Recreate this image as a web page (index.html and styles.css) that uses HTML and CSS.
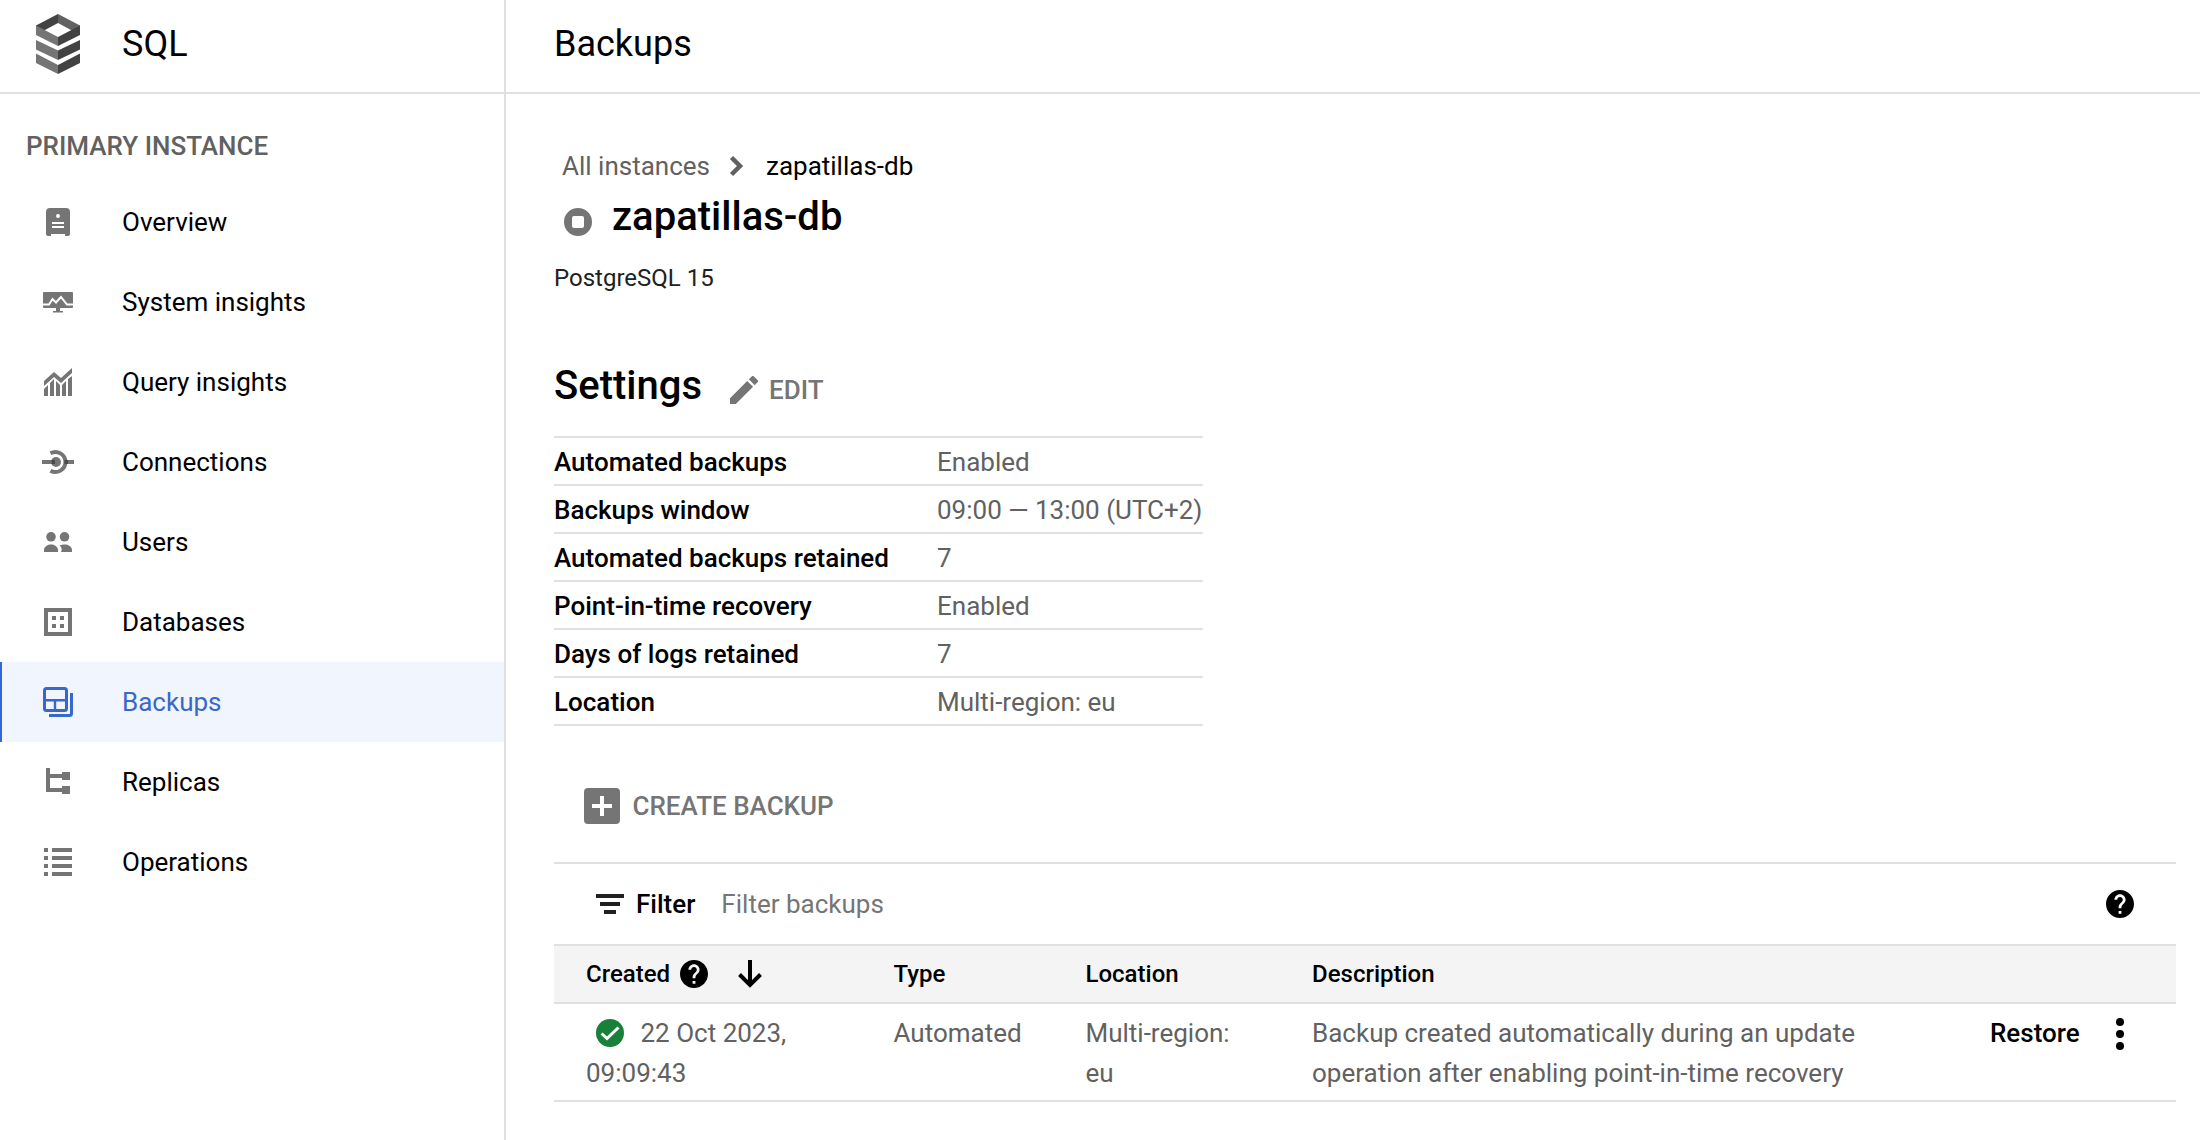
FILE: index.html
```html
<!DOCTYPE html>
<html lang="en">
<head>
<meta charset="utf-8">
<title>SQL – Backups</title>
<link rel="stylesheet" href="styles.css">
</head>
<body>
<div class="app">
  <aside class="sidebar">
    <div class="brand">
      <svg class="brand-logo" viewBox="0 0 44 60">
        <path fill="#424242" d="M22 0L0 11.500v5l9-.5 13-7z"/>
        <path fill="#616161" d="M22 0l22 11.500v5l-9-.5L22 9z"/>
        <path fill="#757575" d="M0 11.500l22 11.500v9L0 21zM0 26l22 10.500v9.500L0 35.500zM0 39.500l22 11.500v9L0 49z"/>
        <path fill="#424242" d="M44 11.500L22 23v9l22-11zM44 26L22 36.500v9.500l22-10.500zM44 39.500L22 51v9l22-11z"/>
      </svg>
      <span class="brand-name">SQL</span>
    </div>
    <h2 class="nav-title">PRIMARY INSTANCE</h2>
    <nav class="nav">
      <a class="nav-item"><svg class="nav-icon" viewBox="0 0 36 36"><path fill-rule="evenodd" d="M10 4h16q4 0 4 4v22q0 2-2 2h-3v-2H11v2H8q-2 0-2-2V8q0-4 4-4zm8 6a2 2 0 1 0 0 4 2 2 0 0 0 0-4zm-6 8v2h12v-2zm0 4v2h12v-2z"/></svg><span>Overview</span></a>
      <a class="nav-item"><svg class="nav-icon" viewBox="0 0 36 36"><path d="M4 8h28q1 0 1 1v14q0 1-1 1H20v3h3v1.500H13V27h3v-3H4q-1 0-1-1V9q0-1 1-1z"/><path class="trace" d="M3 20.500h6l3.500-5.500 3.500 3.500 5-5.500 6 7.500h6"/></svg><span>System insights</span></a>
      <a class="nav-item"><svg class="nav-icon" viewBox="0 0 36 36"><path d="M4 17L14 8l7 6L32 4v5L21 19l-7-6L4 22zM4 25l4-4v11H4zM10 19l4-4v17h-4zM16 17l4 4v11h-4zM22 21l4-4v15h-4zM28 15l4-3v20h-4z"/></svg><span>Query insights</span></a>
      <a class="nav-item"><svg class="nav-icon" viewBox="0 0 36 36"><path class="ring" d="M10.500 9.300a10 10 0 1 1 0 17.400"/><circle cx="16" cy="18" r="5"/><path d="M2 16h12v4H2zM26 16h8v4h-8z"/><path class="joint" d="M11.500 16H15v4h-3.500zM24.500 16H28v4h-3.500z"/></svg><span>Connections</span></a>
      <a class="nav-item"><svg class="nav-icon" viewBox="0 0 36 36"><circle cx="11" cy="12.800" r="4.800"/><circle cx="24.500" cy="12.800" r="4.800"/><path d="M4 28v-2c0-3.500 4-5.500 7-5.500s7 2 7 5.500v2zM21 28c1.500-3 .5-5-1.500-6.500 1.500-.8 3.500-1 5.500-1 3 0 7 2 7 5.500v2z"/></svg><span>Users</span></a>
      <a class="nav-item"><svg class="nav-icon" viewBox="0 0 36 36"><path fill-rule="evenodd" d="M4 4h28v28H4zm4 4v20h20V8z"/><path d="M12 12h4v4h-4zM20 12h4v4h-4zM12 20h4v4h-4zM20 20h4v4h-4z"/></svg><span>Databases</span></a>
      <a class="nav-item active"><svg class="nav-icon" viewBox="0 0 36 36"><path class="outline" d="M6.500 4.500h18q2 0 2 2v18q0 2-2 2h-18q-2 0-2-2v-18q0-2 2-2zM9 31.500h20.500q2 0 2-2V9"/><path class="outline inner" d="M4.500 16.200h22M15 16.200v10"/></svg><span>Backups</span></a>
      <a class="nav-item"><svg class="nav-icon" viewBox="0 0 36 36"><path d="M6 4h4v6h12V8h8v8h-8v-2H10v10h12v-2h8v8h-8v-2H6z"/></svg><span>Replicas</span></a>
      <a class="nav-item"><svg class="nav-icon" viewBox="0 0 36 36"><path d="M4 4h4v4H4zM12 4h20v4H12zM4 12h4v4H4zM12 12h20v4H12zM4 20h4v4H4zM12 20h20v4H12zM4 28h4v4H4zM12 28h20v4H12z"/></svg><span>Operations</span></a>
    </nav>
  </aside>

  <main class="main">
    <header class="page-header"><h1>Backups</h1></header>
    <div class="content">
      <div class="breadcrumb">
        <a>All instances</a>
        <svg class="chevron" viewBox="0 0 12 20"><path d="M1.500 1.500L10 10l-8.500 8.500"/></svg>
        <span>zapatillas-db</span>
      </div>
      <div class="instance">
        <svg class="status" viewBox="0 0 28 28"><path fill-rule="evenodd" d="M14 0a14 14 0 1 0 0 28 14 14 0 0 0 0-28zM10 8h8q2 0 2 2v8q0 2-2 2h-8q-2 0-2-2v-8q0-2 2-2z"/></svg>
        <h2>zapatillas-db</h2>
      </div>
      <p class="engine">PostgreSQL 15</p>

      <div class="settings-head">
        <h2>Settings</h2>
        <button class="btn edit"><svg class="pencil" viewBox="3 3 18 18"><path d="M3 17.250V21h3.750L17.810 9.940l-3.750-3.750L3 17.250zM20.710 7.040a1 1 0 0 0 0-1.410l-2.340-2.340a1 1 0 0 0-1.410 0l-1.830 1.830 3.750 3.750 1.830-1.830z"/></svg><span>EDIT</span></button>
      </div>
      <dl class="settings">
        <div><dt>Automated backups</dt><dd>Enabled</dd></div>
        <div><dt>Backups window</dt><dd>09:00 — 13:00 (UTC+2)</dd></div>
        <div><dt>Automated backups retained</dt><dd>7</dd></div>
        <div><dt>Point-in-time recovery</dt><dd>Enabled</dd></div>
        <div><dt>Days of logs retained</dt><dd>7</dd></div>
        <div><dt>Location</dt><dd>Multi-region: eu</dd></div>
      </dl>

      <button class="btn create"><svg class="plus" viewBox="0 0 36 36"><path fill-rule="evenodd" d="M4 0h28q4 0 4 4v28q0 4-4 4H4q-4 0-4-4V4q0-4 4-4zm12 8v8H8v4h8v8h4v-8h8v-4h-8V8z"/></svg><span>CREATE BACKUP</span></button>

      <section class="backups">
        <div class="filter">
          <svg class="filter-icon" viewBox="0 0 28 20"><path d="M0 0h28v4H0zM4 8h20v4H4zM8 16h12v4H8z"/></svg>
          <b>Filter</b>
          <span class="placeholder">Filter backups</span>
          <svg class="help" viewBox="2 2 20 20"><path d="M12 2C6.480 2 2 6.480 2 12s4.480 10 10 10 10-4.480 10-10S17.520 2 12 2zm1 17h-2v-2h2v2zm2.070-7.750l-.9.920C13.450 12.900 13 13.500 13 15h-2v-.5c0-1.100.45-2.100 1.170-2.830l1.240-1.260c.37-.36.59-.86.59-1.410 0-1.100-.9-2-2-2s-2 .9-2 2H8c0-2.210 1.790-4 4-4s4 1.790 4 4c0 .88-.36 1.680-.93 2.250z"/></svg>
        </div>
        <div class="row head">
          <div class="created">Created
            <svg class="help" viewBox="2 2 20 20"><path d="M12 2C6.480 2 2 6.480 2 12s4.480 10 10 10 10-4.480 10-10S17.520 2 12 2zm1 17h-2v-2h2v2zm2.070-7.750l-.9.920C13.450 12.900 13 13.500 13 15h-2v-.5c0-1.100.45-2.100 1.170-2.830l1.240-1.260c.37-.36.59-.86.59-1.410 0-1.100-.9-2-2-2s-2 .9-2 2H8c0-2.210 1.790-4 4-4s4 1.790 4 4c0 .88-.36 1.680-.93 2.250z"/></svg>
            <svg class="sort" viewBox="0 0 24 28"><path d="M12 0v25M1.500 14.500L12 25l10.500-10.500"/></svg>
          </div>
          <div>Type</div>
          <div>Location</div>
          <div>Description</div>
          <div></div>
        </div>
        <div class="row">
          <div><svg class="ok" viewBox="0 0 28 28"><circle cx="14" cy="14" r="14"/><path d="M5.500 14.500l5.500 5L22.500 8.500"/></svg>22 Oct 2023,<br>09:09:43</div>
          <div>Automated</div>
          <div>Multi-region:<br>eu</div>
          <div>Backup created automatically during an update<br>operation after enabling point-in-time recovery</div>
          <div class="actions"><b>Restore</b><svg class="more" viewBox="0 0 8 32"><circle cx="4" cy="4" r="4"/><circle cx="4" cy="16" r="4"/><circle cx="4" cy="28" r="4"/></svg></div>
        </div>
      </section>
    </div>
  </main>
</div>
</body>
</html>
```
FILE: styles.css
```css
* { box-sizing: border-box; margin: 0; padding: 0; }
body { font: 26px/40px Roboto, sans-serif; color: #000; background: #fff; }
svg { display: block; flex: none; fill: #757575; }
b, h2 { font-weight: 500; }

.app { display: flex; height: 1140px; overflow: hidden; }
.sidebar { width: 506px; flex: none; border-right: 2px solid #e0e0e0; }
.brand, .page-header { height: 94px; display: flex; align-items: center; border-bottom: 2px solid #e0e0e0; padding-bottom: 4px; font-size: 36px; }
.brand { padding-left: 36px; gap: 42px; }
.brand-logo { width: 44px; height: 60px; }
.nav-title { height: 88px; padding: 32px 0 0 26px; font-size: 26px; line-height: 40px; color: #616161; }
.nav-item { display: flex; align-items: center; gap: 46px; height: 80px; padding-left: 40px; }
.nav-icon { width: 36px; height: 36px; }
.active { background: #f0f5fe; color: #3a67cc; border-left: 2px solid #3367d6; padding-left: 38px; }
.trace { fill: none; stroke: #fff; stroke-width: 2; }
.ring { fill: none; stroke: #757575; stroke-width: 4; }
.joint { fill: #4a4a4a; }
.outline { fill: none; stroke: #3a67cc; stroke-width: 3; }
.inner { stroke-width: 2.4; }

.main { flex: 1; }
.page-header { padding-left: 48px; }
.page-header h1 { font-size: 36px; font-weight: 400; }
.content { padding: 52px 24px 0 48px; }
.breadcrumb { display: flex; align-items: center; gap: 24px; padding-left: 8px; height: 40px; }
.breadcrumb a { margin-right: -4px; color: #616161; }
.chevron { width: 12px; height: 20px; fill: none; stroke: #616161; stroke-width: 4.5; overflow: visible; }
.instance { display: flex; align-items: center; gap: 20px; padding-left: 10px; height: 72px; }
.instance h2, .settings-head h2 { font-size: 40px; line-height: 48px; }
.instance h2 { padding-bottom: 10px; }
.status { width: 28px; height: 28px; }
.engine { font-size: 24px; line-height: 40px; color: #212121; }
.settings-head { display: flex; align-items: center; gap: 28px; height: 48px; margin: 64px 0 26px; }
.btn { display: flex; align-items: center; border: 0; background: none; font: 500 26px/40px Roboto, sans-serif; color: #757575; }
.edit { gap: 11px; padding-top: 8px; }
.pencil { width: 28px; height: 28px; }
.settings { width: 649px; border-top: 2px solid #e0e0e0; }
.settings div { display: grid; grid-template-columns: 383px 1fr; height: 48px; padding-top: 4px; border-bottom: 2px solid #e0e0e0; white-space: nowrap; }
.settings dt { font-weight: 500; }
.settings dd { color: #616161; }
.create { gap: 12.5px; margin: 60px 0 36px 30px; height: 40px; }
.plus { width: 36px; height: 36px; }

.backups { border-top: 2px solid #e0e0e0; }
.filter { display: flex; align-items: center; height: 80px; padding: 0 42px; }
.filter-icon { width: 28px; height: 20px; margin-right: 12px; fill: #212121; }
.placeholder { flex: 1; margin-left: 26px; color: #757575; }
.help { width: 28px; height: 28px; fill: #000; }
.row { display: grid; grid-template-columns: 307.5px 192px 226.5px 656px 1fr; padding: 9px 0 7px 32px; color: #616161; border-bottom: 2px solid #e0e0e0; }
.head { padding: 8px 0 8px 32px; background: #f4f4f4; border-top: 2px solid #e0e0e0; color: #000; font-size: 24px; font-weight: 500; }
.created { display: flex; align-items: center; gap: 10px; }
.sort { width: 24px; height: 28px; margin-left: 20px; fill: none; stroke: #000; stroke-width: 4; }
.ok { display: inline-block; vertical-align: -5px; width: 28px; height: 28px; margin: 0 16.5px 0 10px; fill: #188038; }
.ok path { fill: none; stroke: #fff; stroke-width: 3; }
.actions { display: flex; align-items: flex-start; gap: 36px; padding-left: 22px; color: #000; }
.more { width: 8px; height: 32px; margin-top: 5px; fill: #000; }
```
